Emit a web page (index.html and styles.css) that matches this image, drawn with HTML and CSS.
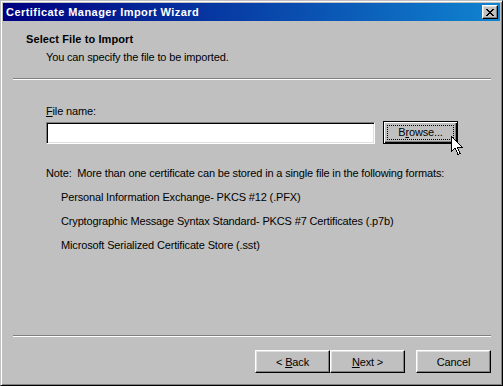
FILE: index.html
```html
<!DOCTYPE html>
<html lang="en">
<head>
    <meta charset="UTF-8">
    <title>Certificate Manager Import Wizard</title>
    <link rel="stylesheet" href="styles.css">
</head>
<body>
    <div class="window">
        <div class="titlebar">
            <span class="title">Certificate Manager Import Wizard</span>
            <button class="close-btn" aria-label="Close">
                <svg width="8" height="7" viewBox="0 0 8 7">
                    <path d="M0 0h2v1h1v1h2v-1h1v-1h2v1h-1v1h-1v1h-1v1h1v1h1v1h1v1h-2v-1h-1v-1h-2v1h-1v1h-2v-1h1v-1h1v-1h1v-1h-1v-1h-1v-1h-1z" fill="#000"/>
                </svg>
            </button>
        </div>

        <div class="header">
            <h1>Select File to Import</h1>
            <p>You can specify the file to be imported.</p>
        </div>
        <div class="separator"></div>

        <div class="content">
            <label class="field-label" for="fileName"><u>F</u>ile name:</label>
            <div class="file-row">
                <input type="text" id="fileName" class="text-input">
                <button class="btn btn-default"><span class="focus-ring">B<u>r</u>owse...</span></button>
            </div>
            <p class="note">Note:&nbsp; More than one certificate can be stored in a single file in the following formats:</p>
            <ul class="formats">
                <li>Personal Information Exchange- PKCS #12 (.PFX)</li>
                <li>Cryptographic Message Syntax Standard- PKCS #7 Certificates (.p7b)</li>
                <li>Microsoft Serialized Certificate Store (.sst)</li>
            </ul>
        </div>

        <div class="separator"></div>
        <div class="footer">
            <div class="nav-buttons">
                <button class="btn">&lt; <u>B</u>ack</button>
                <button class="btn"><u>N</u>ext &gt;</button>
            </div>
            <button class="btn">Cancel</button>
        </div>

        <svg class="cursor" width="12" height="19" viewBox="0 0 12 19">
            <path d="M0.5 0.5v15l3.5-3.5 3 6.5 2-1-3-6.5h5z" fill="#fff" stroke="#000" stroke-width="1" shape-rendering="crispEdges"/>
        </svg>
    </div>
</body>
</html>
```

FILE: styles.css
```css
* {
    box-sizing: border-box;
}

body {
    margin: 0;
    font-family: "Liberation Sans", Arial, sans-serif;
    font-size: 11px;
    letter-spacing: -0.15px;
    color: #000;
    background: #c0c0c0;
}

.window {
    position: relative;
    width: 503px;
    height: 386px;
    display: flex;
    flex-direction: column;
    padding: 1px;
    background: #c0c0c0;
    border: 1px solid;
    border-color: #c0c0c0 #000 #000 #c0c0c0;
    box-shadow: inset 1px 1px #fff, inset -1px -1px #808080;
}

.window > * {
    margin-left: 1px;
    margin-right: 1px;
}

.titlebar {
    margin-top: 1px;
    height: 18px;
    display: flex;
    align-items: center;
    justify-content: space-between;
    padding: 0 2px 0 3px;
    background: linear-gradient(90deg, #000080 0%, #1084d0 100%);
}

.title {
    color: #fff;
    font-weight: bold;
    font-size: 11px;
    letter-spacing: 0.45px;
}

.close-btn {
    width: 16px;
    height: 14px;
    padding: 0;
    display: flex;
    align-items: center;
    justify-content: center;
    background: #c0c0c0;
    border: 1px solid;
    border-color: #fff #000 #000 #fff;
    box-shadow: inset -1px -1px #808080, inset 1px 1px #dfdfdf;
}

.header {
    padding: 12px 0 0 23px;
    height: 57px;
}

.header h1 {
    margin: 0;
    font-size: 11px;
    font-weight: bold;
    line-height: 13px;
    letter-spacing: 0.1px;
}

.header p {
    margin: 5px 0 0 20px;
    line-height: 13px;
}

.separator {
    height: 2px;
    margin: 0 10px 0 11px;
    border-top: 1px solid #808080;
    border-bottom: 1px solid #fff;
}

.content {
    flex: 1;
    padding: 25px 0 0 43px;
}

.field-label {
    display: block;
    line-height: 13px;
}

.file-row {
    display: flex;
    align-items: center;
    gap: 8px;
    margin-top: 3px;
}

.text-input {
    width: 329px;
    height: 22px;
    margin: 0;
    background: #fff;
    border: 1px solid;
    border-color: #808080 #fff #fff #808080;
    box-shadow: inset 1px 1px #000, inset -1px -1px #dfdfdf;
    outline: none;
}

.btn {
    width: 75px;
    height: 23px;
    padding: 0;
    font-family: inherit;
    font-size: 11px;
    letter-spacing: inherit;
    color: #000;
    background: #c0c0c0;
    border: 1px solid;
    border-color: #fff #000 #000 #fff;
    box-shadow: inset -1px -1px #808080, inset 1px 1px #dfdfdf;
}

.btn-default {
    border: 1px solid #000;
    box-shadow: inset 1px 1px #fff, inset -1px -1px #000, inset -2px -2px #808080;
    padding: 3px;
}

.focus-ring {
    display: block;
    height: 100%;
    line-height: 13px;
    border: 1px dotted #000;
}

.note {
    margin: 23px 0 0;
    line-height: 13px;
}

.formats {
    list-style: none;
    margin: 0;
    padding: 0 0 0 15px;
}

.formats li {
    margin-top: 11px;
    line-height: 13px;
}

.footer {
    display: flex;
    justify-content: flex-end;
    gap: 11px;
    padding: 13px 9px 11px 0;
}

.nav-buttons {
    display: flex;
}

.cursor {
    position: absolute;
    left: 449px;
    top: 135px;
}
```
